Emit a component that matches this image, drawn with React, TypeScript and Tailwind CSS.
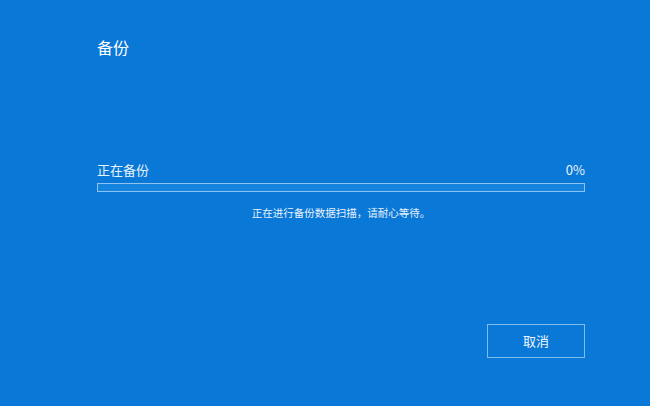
import React from 'react';

const App: React.FC = () => {
  return (
    <div
      className="w-[650px] h-[406px] bg-[#0a78d7] text-white flex flex-col pl-[97px] pr-[65px] pt-[37px] overflow-hidden"
      style={{ fontFamily: '"Noto Sans CJK SC", "Microsoft YaHei", sans-serif' }}
    >
      <h1 className="text-[16px] leading-[20px] font-normal">备份</h1>

      <div className="mt-[105px] flex justify-between items-end text-[13px] leading-[16px] text-[#e8f2fb]">
        <span>正在备份</span>
        <span>0%</span>
      </div>
      <div className="mt-[5px] h-[9px] border border-[#8cc3f0] bg-[#1584df]" />

      <p className="mt-[13px] text-center text-[10.5px] leading-[15px] text-[#e8f2fb]">
        正在进行备份数据扫描，请耐心等待。
      </p>

      <div className="mt-[104px] flex justify-end">
        <button className="w-[98px] h-[34px] border border-[#7fbbec] text-[13px] text-[#eef6fd]">
          取消
        </button>
      </div>
    </div>
  );
};

export default App;
